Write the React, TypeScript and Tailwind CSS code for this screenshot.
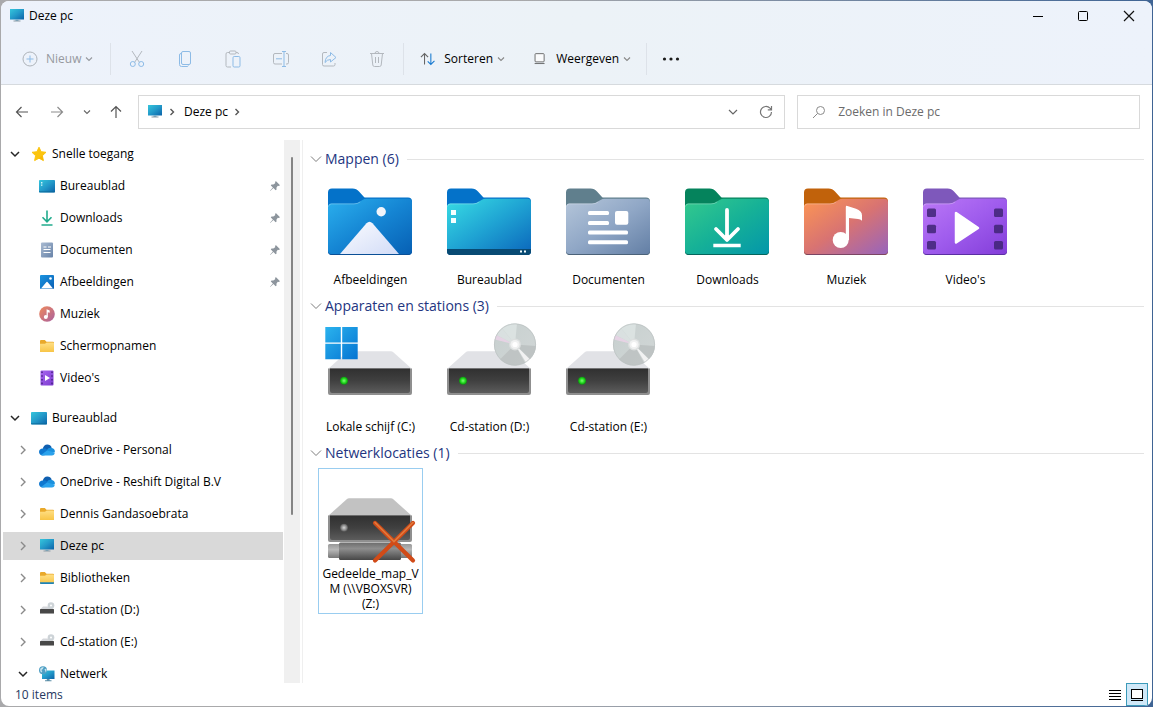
import React, { ReactNode } from "react";

type IconProps = { className?: string };

/* ---------- shared glyphs ---------- */

function ChevronDown({ className = "" }: IconProps) {
  return (
    <svg viewBox="0 0 8 8" className={`size-2 shrink-0 ${className}`} fill="none" stroke="currentColor" aria-hidden="true">
      <path d="M1 2.5 4 5.5 7 2.5" strokeWidth="1.1" />
    </svg>
  );
}

function TreeChevron({ open }: { open: boolean }) {
  return open ? (
    <svg viewBox="0 0 10 10" className="size-2.5 shrink-0 text-[#262626]" fill="none" stroke="currentColor" aria-hidden="true">
      <path d="M1 3 5 7 9 3" strokeWidth="1.5" />
    </svg>
  ) : (
    <svg viewBox="0 0 10 10" className="size-2.5 shrink-0 text-[#8a8a8a]" fill="none" stroke="currentColor" aria-hidden="true">
      <path d="M3 1 7 5 3 9" strokeWidth="1.4" />
    </svg>
  );
}

function BreadcrumbChevron() {
  return (
    <svg viewBox="0 0 6 8" className="h-2 w-1.5 shrink-0 text-[#555]" fill="none" stroke="currentColor" aria-hidden="true">
      <path d="M1.5 1 4.5 4 1.5 7" strokeWidth="1.4" />
    </svg>
  );
}

function Small({ children }: { children: ReactNode }) {
  return (
    <svg viewBox="0 0 16 16" className="size-4 shrink-0" aria-hidden="true">
      {children}
    </svg>
  );
}

/* ---------- 16px icons ---------- */

function PcIcon() {
  return (
    <Small>
      <path d="M1 1h14v10.5H1z" fill="url(#screen)" />
      <path d="M6.5 11.5h3V13h-3z" fill="#6fa7c4" />
      <path d="M4.5 12.5h7v1h-7z" fill="#8a9aa5" />
    </Small>
  );
}

function StarIcon() {
  return (
    <Small>
      <path
        d="M8 1.2 10.1 5.7 15 6.3 11.4 9.7 12.4 14.6 8 12.2 3.6 14.6 4.6 9.7 1 6.3 5.9 5.7z"
        fill="#fbc40f"
        stroke="#fbc40f"
        strokeLinejoin="round"
      />
      <path d="M8 12.2 12.4 14.6 11.4 9.7 15 6.3" fill="#f6b100" opacity=".6" />
    </Small>
  );
}

function DesktopIcon({ dots = false }: { dots?: boolean }) {
  return (
    <Small>
      <rect y="2" width="16" height="12.5" rx=".8" fill="url(#screen)" />
      {dots && <path d="M2 4h1.4v1.4H2zM2 6.4h1.4v1.4H2z" fill="#d7f6fb" />}
      <path d="M0 13h16v.7q0 .8-.8.8H.8q-.8 0-.8-.8z" fill="#0a6a9a" opacity=".6" />
    </Small>
  );
}

function DownloadIcon() {
  return (
    <Small>
      <g fill="none" stroke="#20ab8c" strokeWidth="1.6">
        <path d="M8 .5v11M3.5 7.3 8 11.8l4.5-4.5" />
        <path d="M2.500 15h11" />
      </g>
    </Small>
  );
}

function DocumentIcon() {
  return (
    <Small>
      <rect x="2" y=".5" width="12" height="15" rx="1" fill="url(#doc)" />
      <path d="M4.500 5h3M4.500 7.500h7M4.500 10.500h7M9 5h3" stroke="#fff" strokeWidth="1.200" />
    </Small>
  );
}

function PictureIcon() {
  return (
    <Small>
      <rect x="1" y="1" width="14" height="14" rx="1" fill="url(#pic)" />
      <path d="M2 14.500 7.500 8q.5-.6 1 0L14 14.500z" fill="#fff" />
      <circle cx="11.500" cy="4.500" r="1.300" fill="#fff" />
    </Small>
  );
}

function MusicIcon() {
  return (
    <Small>
      <circle cx="8" cy="8" r="7.800" fill="url(#mus)" />
      <circle cx="6.800" cy="11" r="2" fill="#fff" />
      <path d="M7.600 3.300 10.700 4.500V6.800L8.800 6.200V11H7.600z" fill="#fff" />
    </Small>
  );
}

function FolderIcon({ library = false }: { library?: boolean }) {
  return (
    <Small>
      <path d="M1 3q0-1 1-1h3.800l1.700 1.700H14q1 0 1 1V13q0 1-1 1H2q-1 0-1-1z" fill="#e9a92b" />
      <path d="M1 5.800h5l1.700-1.300H14q1 0 1 1V13q0 1-1 1H2q-1 0-1-1z" fill="url(#fold)" />
      {library && <path d="M1 12.300h14v.7q0 1-1 1H2q-1 0-1-1z" fill="#1c83b8" />}
    </Small>
  );
}

function VideoIcon() {
  return (
    <Small>
      <rect x="1.500" y=".5" width="13" height="15" rx="1" fill="url(#vid)" />
      <path d="M6 5v6l5-3z" fill="#fff" />
      <path d="M3 1.500v13M13 1.500v13" stroke="#4b2385" strokeWidth="1.500" strokeDasharray="1.600 2.100" />
    </Small>
  );
}

function CloudIcon() {
  return (
    <Small>
      <path d="M3.800 7.200C4 4.500 6 2.600 8.400 2.600c2 0 3.600 1.200 4.300 3L8 9z" fill="#0f5fb0" />
      <path d="M3.700 13.400C1.600 13.400 0 11.800 0 9.900s1.700-3.500 3.900-3.400c1-.6 2.400-.3 3.400.5L12 12z" fill="#0f78d0" />
      <path d="M8 8c1-2 3-2.800 4.900-2 1.800.4 3.100 2 3.100 3.800L11 11z" fill="#1a90dd" />
      <path d="M2 13 8 8.500 15.800 10.500q-.2 2.900-3 2.900H3.700q-1 0-1.700-.4z" fill="#2ba2ec" />
    </Small>
  );
}

function DriveIcon() {
  return (
    <Small>
      <path d="M4 4.500h8L15 7.500H1z" fill="#d5d7db" />
      <circle cx="12" cy="3.500" r="3.300" fill="#cdd3d7" />
      <circle cx="12" cy="3.500" r="1" fill="#fff" />
      <rect x="1" y="7" width="14" height="4.500" rx=".5" fill="#484848" />
      <path d="M1 11.500h14" stroke="#999" strokeWidth=".6" />
    </Small>
  );
}

function NetworkIcon() {
  return (
    <Small>
      <path d="M3 4.500h12.500V13H3z" fill="url(#screen)" />
      <path d="M7.800 13h2.800v1.500H7.800zM6 14.300h6.500v1H6z" fill="#5b8ea8" />
      <circle cx="4" cy="4.200" r="4" fill="#4f9fc4" />
      <path d="M1.200 2.800q1.500-2 3.500-1.800l-.8 2-1.400 1 .8 2-1.300.5q-1.200-1.700-.8-3.700zM5.500 3l1.800-.3q.7 2-.5 3.700z" fill="#c4e3ee" />
    </Small>
  );
}

function PinIcon() {
  return (
    <svg viewBox="0 0 12 12" className="size-3 shrink-0" aria-hidden="true">
      <path d="M6.800 1 11 5.200 9.800 5.900 8.800 5.800 7.400 7.700 7.600 9.500 6.600 10.200 4.500 8.100 1.200 11 1 10.800 3.900 7.500 1.800 5.400 2.500 4.400 4.300 4.600 6.200 3.200 6.100 2.200z" fill="#8d959d" />
    </svg>
  );
}

/* ---------- large tile art ---------- */

function Art({ children }: { children: ReactNode }) {
  return (
    <svg viewBox="0 0 103 97" className="h-[97px] w-[103px] shrink-0" aria-hidden="true">
      {children}
    </svg>
  );
}

type FolderArtProps = {
  id: string;
  back: string;
  edge: string;
  stops: [string, string, string];
  children: ReactNode;
};

function FolderArt({ id, back, edge, stops, children }: FolderArtProps) {
  return (
    <Art>
      <defs>
        <linearGradient id={id} x1="0" y1="0" x2="1" y2="1">
          <stop offset="0" stopColor={stops[0]} />
          <stop offset=".5" stopColor={stops[1]} />
          <stop offset="1" stopColor={stops[2]} />
        </linearGradient>
      </defs>
      <path d="M9 17.500q0-4 4-4h20.500q4 0 6.500 3l5 5.500q.6.500 1.500.5H89q4 0 4 4v49.500q0 4-4 4H13q-4 0-4-4z" fill={back} />
      <path d="M9 70h84v6q0 4-4 4H13q-4 0-4-4z" fill={edge} />
      <path
        d="M9 32q0-3.500 3.500-3.500H35q3.500 0 6-2l2.500-1.500q2-1.200 4-1.200H89.500q3.500 0 3.500 3.500V75.500q0 3.500-3.500 3.500H12.500q-3.500 0-3.500-3.500z"
        fill={`url(#${id})`}
      />
      <path d="M9.500 31.500q.5-2.600 3-2.600H35q3.500 0 6.300-2" fill="none" stroke="#fff" strokeOpacity=".35" strokeWidth=".8" />
      {children}
    </Art>
  );
}

function PicturesArt() {
  return (
    <FolderArt id="f-pic" back="#0472c9" edge="#0a4f96" stops={["#2bb0ee", "#1585d3", "#0760b4"]}>
      <circle cx="62.200" cy="36.700" r="4.700" fill="#f1f4fa" />
      <path d="M21 79 47.500 48.300q3-3 6 0L80 79z" fill="url(#mount)" />
    </FolderArt>
  );
}

function DesktopArt() {
  return (
    <FolderArt id="f-desk" back="#0472c9" edge="#073c66" stops={["#38dde4", "#1fa3d3", "#0b66bb"]}>
      <path d="M9 74h84v2q0 4-4 4H13q-4 0-4-4z" fill="#084a73" />
      <path d="M13 35h5v5h-5zM13 43h5v5h-5zM82 75.500h2v2h-2zM86 75.500h2v2h-2z" fill="#f5ffff" />
    </FolderArt>
  );
}

function DocumentsArt() {
  return (
    <FolderArt id="f-doc" back="#607f8d" edge="#4b6279" stops={["#b5c6da", "#90a7c6", "#637fa5"]}>
      <g fill="#fff">
        <rect x="31" y="36" width="21" height="4" rx="1.500" />
        <rect x="31" y="46" width="21" height="4" rx="1.500" />
        <rect x="31" y="55.500" width="40" height="4" rx="1.500" />
        <rect x="31" y="65.300" width="40" height="4" rx="1.500" />
        <rect x="58" y="36" width="13.300" height="13.700" rx="2" />
      </g>
    </FolderArt>
  );
}

function DownloadsArt() {
  return (
    <FolderArt id="f-down" back="#05835c" edge="#05655c" stops={["#35ca8d", "#16b197", "#0396aa"]}>
      <g fill="none" stroke="#fff" strokeWidth="3.800" strokeLinecap="round" strokeLinejoin="round">
        <path d="M51 35v28M40 54 51 65 62 54" />
        <path d="M39 70.500h24" strokeLinecap="square" strokeWidth="3.400" />
      </g>
    </FolderArt>
  );
}

function MusicArt() {
  return (
    <FolderArt id="f-mus" back="#c1620b" edge="#7b4563" stops={["#fd9653", "#d87372", "#9764bd"]}>
      <circle cx="45.700" cy="65" r="8" fill="#fff" />
      <path d="M50.800 32q0-1.600 1.600-1.100L61 33.700q6 2 6 6.800v5.200q-1.500-1.200-4-1.600L54 43v22h-3.200z" fill="#fff" />
    </FolderArt>
  );
}

function VideosArt() {
  return (
    <FolderArt id="f-vid" back="#7e58bb" edge="#5b2fa3" stops={["#bb78f7", "#9f5ced", "#833dd9"]}>
      <g fill="#3f2476" fillOpacity=".85">
        {[33.5, 49.8, 66].map((y) => (
          <g key={y}>
            <rect x="13" y={y} width="9" height="8.500" rx="1.500" />
            <rect x="80" y={y} width="9" height="8.500" rx="1.500" />
          </g>
        ))}
      </g>
      <path d="M42 38v29.500L64 53z" fill="#fff" stroke="#fff" strokeWidth="2.500" strokeLinejoin="round" />
    </FolderArt>
  );
}

function DriveBody({ top, led }: { top: string; led: string }) {
  return (
    <>
      <path d="M28 30q.8-.7 2-.7h42q1.200 0 2 .7L93 47H9z" fill={top} />
      <path d="M9 46.500h84v24.500q0 2-2 2H11q-2 0-2-2z" fill="#8f8f8f" />
      <path d="M11 46.500h80v22.500q0 2-2 2H13q-2 0-2-2z" fill="url(#metal)" />
      <circle cx="25" cy="58.700" r="4" fill={`url(#${led})`} />
    </>
  );
}

function LocalDriveArt() {
  return (
    <Art>
      <DriveBody top="#e1e2e6" led="ledGreen" />
      <path d="M6.300 5h15.500v15.500H6.300zM23.200 5h15.500v15.500H23.200zM6.300 21.800h15.500V37.200H6.300zM23.200 21.800h15.500V37.200H23.200z" fill="url(#win)" />
    </Art>
  );
}

function DiscDriveArt() {
  return (
    <Art>
      <DriveBody top="#e1e2e6" led="ledGreen" />
      <circle cx="77" cy="22.500" r="21" fill="url(#disc)" />
      <path d="M77 22.500 56.800 17.500Q57.200 15.500 58.500 13z" fill="#ecd3e8" opacity=".8" />
      <path d="M77 22.500 58.500 13Q61 8.500 64 6z" fill="#dde4e3" opacity=".8" />
      <path d="M77 22.500 64 6q6-5 15-4.400z" fill="#dfe6e5" opacity=".8" />
      <path d="M77 22.500 97.900 24Q97.500 32 92 37z" fill="#b9bebe" opacity=".8" />
      <path d="M77 22.500 62 37.500Q69 44 78 43.500L87 41z" fill="#b9bebe" opacity=".7" />
      <path d="M77 22.500 92 37.500 88 40.500z" fill="#f5f5f5" opacity=".9" />
      <circle cx="77" cy="22.500" r="6" fill="#dcdfdf" />
      <circle cx="77" cy="22.500" r="4.600" fill="#f0f1f1" />
      <circle cx="77" cy="22.500" r="2.600" fill="#fff" />
      <circle cx="77" cy="22.500" r="20.600" fill="none" stroke="#bcc1c1" strokeWidth=".7" />
    </Art>
  );
}

function NetworkDriveArt() {
  return (
    <Art>
      <DriveBody top="#c2c2c2" led="ledGray" />
      <rect x="9" y="75" width="84" height="14" rx="1.500" fill="url(#pipeLight)" />
      <rect x="20" y="73.500" width="62" height="17.500" rx="1.500" fill="url(#pipe)" />
      <g stroke="#d14b18" strokeWidth="4.200" strokeLinecap="round">
        <path d="M56 54 94 91.500M94 54 56 91.500" />
      </g>
      <path d="M56 53.500 75 72.500 94 53.500" fill="none" stroke="#e27a3c" strokeWidth="1.600" strokeLinecap="round" />
    </Art>
  );
}

function SharedGradients() {
  return (
    <svg className="absolute size-0" aria-hidden="true">
      <defs>
        <linearGradient id="screen" x1="0" y1="0" x2="1" y2="1">
          <stop offset="0" stopColor="#35c6dc" />
          <stop offset=".5" stopColor="#2399c9" />
          <stop offset="1" stopColor="#0b62a8" />
        </linearGradient>
        <linearGradient id="doc" x1="0" y1="0" x2="1" y2="1">
          <stop offset="0" stopColor="#a9bbd2" />
          <stop offset="1" stopColor="#6883a8" />
        </linearGradient>
        <linearGradient id="pic" x1="0" y1="0" x2="1" y2="1">
          <stop offset="0" stopColor="#1b94e0" />
          <stop offset="1" stopColor="#0a5fb4" />
        </linearGradient>
        <linearGradient id="mus" x1="0" y1="0" x2="1" y2="1">
          <stop offset="0" stopColor="#f08a5b" />
          <stop offset="1" stopColor="#a9609f" />
        </linearGradient>
        <linearGradient id="fold" x1="0" y1="0" x2="0" y2="1">
          <stop offset="0" stopColor="#ffdf85" />
          <stop offset="1" stopColor="#f8c546" />
        </linearGradient>
        <linearGradient id="vid" x1="0" y1="0" x2="1" y2="1">
          <stop offset="0" stopColor="#a765ef" />
          <stop offset="1" stopColor="#7c3bd0" />
        </linearGradient>
        <linearGradient id="mount" x1="0" y1="0" x2="1" y2="1">
          <stop offset="0" stopColor="#fbfcff" />
          <stop offset="1" stopColor="#d2dcf7" />
        </linearGradient>
        <linearGradient id="metal" x1="0" y1="0" x2="0" y2="1">
          <stop offset="0" stopColor="#303030" />
          <stop offset=".5" stopColor="#404040" />
          <stop offset="1" stopColor="#5c5c5c" />
        </linearGradient>
        <linearGradient id="win" x1="0" y1="0" x2="1" y2="1">
          <stop offset="0" stopColor="#2bb3ee" />
          <stop offset="1" stopColor="#0474d2" />
        </linearGradient>
        <linearGradient id="disc" x1="0" y1="0" x2="1" y2="1">
          <stop offset="0" stopColor="#c6cfce" />
          <stop offset="1" stopColor="#d2d7d7" />
        </linearGradient>
        <linearGradient id="pipe" x1="0" y1="0" x2="0" y2="1">
          <stop offset="0" stopColor="#6c6c6c" />
          <stop offset=".35" stopColor="#8e8e8e" />
          <stop offset="1" stopColor="#474747" />
        </linearGradient>
        <linearGradient id="pipeLight" x1="0" y1="0" x2="0" y2="1">
          <stop offset="0" stopColor="#999" />
          <stop offset=".4" stopColor="#b8b8b8" />
          <stop offset="1" stopColor="#777" />
        </linearGradient>
        <radialGradient id="ledGreen">
          <stop offset="0" stopColor="#7dff73" />
          <stop offset=".6" stopColor="#20d81c" />
          <stop offset="1" stopColor="#0f8a12" />
        </radialGradient>
        <radialGradient id="ledGray">
          <stop offset="0" stopColor="#d8d8d8" />
          <stop offset=".6" stopColor="#909090" />
          <stop offset="1" stopColor="#555" />
        </radialGradient>
      </defs>
    </svg>
  );
}

/* ---------- title bar and command bar ---------- */

function TitleBar() {
  return (
    <header className="flex h-[30px] shrink-0 items-center pl-2">
      <PcIcon />
      <h1 className="ml-1">Deze pc</h1>
      <div className="ml-auto flex h-full">
        <button aria-label="Minimaliseren" className="grid h-full w-[45px] place-items-center">
          <svg viewBox="0 0 12 12" className="size-3" stroke="#000" aria-hidden="true">
            <path d="M1 6.500h10" />
          </svg>
        </button>
        <button aria-label="Maximaliseren" className="grid h-full w-[46px] place-items-center">
          <svg viewBox="0 0 12 12" className="size-3" fill="none" stroke="#000" aria-hidden="true">
            <rect x="1.500" y="1.500" width="9" height="9" rx="1" />
          </svg>
        </button>
        <button aria-label="Sluiten" className="grid h-full w-[46px] place-items-center">
          <svg viewBox="0 0 12 12" className="size-3" stroke="#111" strokeWidth="1.200" aria-hidden="true">
            <path d="M1 1 11 11M11 1 1 11" />
          </svg>
        </button>
      </div>
    </header>
  );
}

const GRAY = "#b3b8be";
const BLUE = "#8dbbe6";

const commands: { label: string; art: ReactNode }[] = [
  {
    label: "Knippen",
    art: (
      <>
        <path d="M4 1 11.500 12.500M14 1 6.500 12.500" stroke={GRAY} />
        <circle cx="4.800" cy="14" r="2.500" stroke={BLUE} />
        <circle cx="13.200" cy="14" r="2.500" stroke={BLUE} />
      </>
    ),
  },
  {
    label: "Kopiëren",
    art: (
      <>
        <rect x="5.500" y="1.500" width="9" height="13" rx="1.500" stroke={BLUE} />
        <path d="M5.500 3.500H5Q3.500 3.500 3.500 5v9.500q0 2 2 2H11q1 0 1.500-1" stroke={BLUE} />
      </>
    ),
  },
  {
    label: "Plakken",
    art: (
      <>
        <path d="M5.500 2.500h-2q-1.500 0-1.500 1.500v11.500q0 1.500 1.500 1.500H7M12 2.500h1q1.500 0 1.500 1.500" stroke={GRAY} />
        <rect x="5.500" y="1" width="6.500" height="3" rx="1" stroke={GRAY} />
        <rect x="9" y="6.500" width="7" height="10.500" rx="1.200" stroke={BLUE} />
      </>
    ),
  },
  {
    label: "Naam wijzigen",
    art: (
      <>
        <path d="M10 3.500H3Q1.500 3.500 1.500 5v7.500Q1.500 14 3 14h7M14 3.500h1q1.500 0 1.500 1.500v7.500q0 1.500-1.500 1.500h-1" stroke={GRAY} />
        <path d="M12 1.500v15M10 1.500h4M10 16.500h4M4 8.800h6" stroke={BLUE} />
      </>
    ),
  },
  {
    label: "Delen",
    art: (
      <>
        <path d="M7 2.500H4Q2.500 2.500 2.500 4v10.500Q2.500 16 4 16h9.500q1.500 0 1.500-1.500V13" stroke={GRAY} />
        <path d="M10.500 2.500 16 7.500 10.500 12V9.500Q7 9.500 5 12.500 5.500 6 10.500 5.500z" stroke={BLUE} strokeLinejoin="round" />
      </>
    ),
  },
  {
    label: "Verwijderen",
    art: (
      <path
        d="M2 3.500h14M7 3.500Q7 1.500 9 1.500T11 3.500M3.500 3.500 4.800 15Q5 16.500 6.500 16.500h5Q13 16.500 13.200 15L14.500 3.500M7.500 7v6M10.500 7v6"
        stroke={GRAY}
      />
    ),
  },
];

function Separator() {
  return <div className="h-8 w-px shrink-0 bg-[#dde2e9]" />;
}

function CommandBar() {
  return (
    <div role="toolbar" className="flex h-[54px] shrink-0 items-center border-b border-[#d6dade] pt-[3px]">
      <button disabled className="flex w-[109px] items-center pl-[21px] text-[#96999e]">
        <svg viewBox="0 0 16 16" className="size-4" fill="none" aria-hidden="true">
          <circle cx="8" cy="8" r="7" stroke="#aeb3b9" />
          <path d="M8 4.500v7M4.500 8h7" stroke={BLUE} />
        </svg>
        <span className="ml-2">Nieuw</span>
        <ChevronDown className="ml-1" />
      </button>
      <Separator />
      <div className="flex px-0.5">
        {commands.map((c) => (
          <button key={c.label} disabled aria-label={c.label} className="grid h-8 w-12 place-items-center">
            <svg viewBox="0 0 18 18" className="size-[18px]" fill="none" aria-hidden="true">
              {c.art}
            </svg>
          </button>
        ))}
      </div>
      <Separator />
      <button className="ml-4 flex w-[85px] items-center">
        <svg viewBox="0 0 18 16" className="h-4 w-[18px]" fill="none" strokeWidth="1.200" aria-hidden="true">
          <path d="M5 14V2M1 6l4-4 4 4" stroke="#666" />
          <path d="M12 2v12M8.500 10.500 12 14l4-4" stroke="#1a7bd0" />
        </svg>
        <span className="ml-2">Sorteren</span>
        <ChevronDown className="ml-1 text-[#888]" />
      </button>
      <button className="ml-7 flex w-[98px] items-center">
        <svg viewBox="0 0 16 16" className="size-4" fill="none" stroke="#555" aria-hidden="true">
          <rect x="2.500" y="1.500" width="11" height="10" rx="1" fill="#fafbfc" />
          <path d="M2 13.500h12" />
        </svg>
        <span className="ml-2.5">Weergeven</span>
        <ChevronDown className="ml-1 text-[#888]" />
      </button>
      <div className="ml-[15px]">
        <Separator />
      </div>
      <button aria-label="Meer opties" className="ml-2 grid size-8 place-items-center">
        <svg viewBox="0 0 18 4" className="h-1 w-[18px]" fill="#1a1a1a" aria-hidden="true">
          <circle cx="2.500" cy="2" r="1.600" />
          <circle cx="9" cy="2" r="1.600" />
          <circle cx="15.500" cy="2" r="1.600" />
        </svg>
      </button>
    </div>
  );
}

/* ---------- navigation row ---------- */

function Arrow({ d, label, tone }: { d: string; label: string; tone: string }) {
  return (
    <button aria-label={label} className={`grid size-6 place-items-center ${tone}`}>
      <svg viewBox="0 0 14 14" className="size-3.5" fill="none" stroke="currentColor" strokeWidth="1.200" aria-hidden="true">
        <path d={d} />
      </svg>
    </button>
  );
}

function NavigationRow() {
  return (
    <div className="flex shrink-0 items-center bg-white pt-2.5 pr-3 pb-[11px] pl-[9px]">
      <Arrow label="Terug" tone="text-[#555]" d="M13 7H1.500M6.500 2 1.500 7l5 5" />
      <div className="ml-[11px]">
        <Arrow label="Vooruit" tone="text-[#8c8c8c]" d="M1 7h11.500M7.500 2l5 5-5 5" />
      </div>
      <button aria-label="Recente locaties" className="ml-2.5 grid h-6 w-4 place-items-center text-[#666]">
        <ChevronDown />
      </button>
      <div className="ml-[9px]">
        <Arrow label="Omhoog" tone="text-[#555]" d="M7 13V1.500M2 6.500l5-5 5 5" />
      </div>
      <nav aria-label="Adresbalk" className="ml-2.5 flex h-[34px] flex-56 items-center border border-[#d9d9d9] pr-1.5 pl-2">
        <PcIcon />
        <span className="ml-1.5">
          <BreadcrumbChevron />
        </span>
        <a href="#deze-pc" className="ml-[9px]">
          Deze pc
        </a>
        <span className="ml-1.5">
          <BreadcrumbChevron />
        </span>
        <button aria-label="Vorige locaties" className="ml-auto grid size-6 place-items-center text-[#666]">
          <svg viewBox="0 0 10 10" className="size-2.5" fill="none" stroke="currentColor" strokeWidth="1.200" aria-hidden="true">
            <path d="M1 3 5 7 9 3" />
          </svg>
        </button>
        <button aria-label="Vernieuwen" className="ml-[9px] grid size-6 place-items-center text-[#777]">
          <svg viewBox="0 0 14 14" className="size-3.5" fill="none" stroke="currentColor" strokeWidth="1.200" aria-hidden="true">
            <path d="M12.500 7A5.500 5.500 0 1 1 11 3.200L12.500 4.700M12.500 1v3.800H8.800" />
          </svg>
        </button>
      </nav>
      <label className="ml-3 flex h-[34px] flex-29 items-center border border-[#d9d9d9] pl-3.5">
        <svg viewBox="0 0 14 14" className="size-3.5 shrink-0" fill="none" stroke="#8a8a8a" aria-hidden="true">
          <circle cx="8.500" cy="5.500" r="4" />
          <path d="M5.500 8.500 1 13" />
        </svg>
        <input
          type="search"
          aria-label="Zoeken in Deze pc"
          placeholder="Zoeken in Deze pc"
          className="ml-3 min-w-0 flex-1 bg-transparent outline-none placeholder:text-[#6b6b6b]"
        />
      </label>
    </div>
  );
}

/* ---------- sidebar tree ---------- */

type Row = { label: string; icon: ReactNode; pinned?: boolean; chevron?: "open" | "closed"; selected?: boolean };

const quickAccess: Row[] = [
  { label: "Bureaublad", icon: <DesktopIcon dots />, pinned: true },
  { label: "Downloads", icon: <DownloadIcon />, pinned: true },
  { label: "Documenten", icon: <DocumentIcon />, pinned: true },
  { label: "Afbeeldingen", icon: <PictureIcon />, pinned: true },
  { label: "Muziek", icon: <MusicIcon /> },
  { label: "Schermopnamen", icon: <FolderIcon /> },
  { label: "Video's", icon: <VideoIcon /> },
];

const desktopTree: Row[] = [
  { label: "OneDrive - Personal", icon: <CloudIcon />, chevron: "closed" },
  { label: "OneDrive - Reshift Digital B.V", icon: <CloudIcon />, chevron: "closed" },
  { label: "Dennis Gandasoebrata", icon: <FolderIcon />, chevron: "closed" },
  { label: "Deze pc", icon: <PcIcon />, chevron: "closed", selected: true },
  { label: "Bibliotheken", icon: <FolderIcon library />, chevron: "closed" },
  { label: "Cd-station (D:)", icon: <DriveIcon />, chevron: "closed" },
  { label: "Cd-station (E:)", icon: <DriveIcon />, chevron: "closed" },
  { label: "Netwerk", icon: <NetworkIcon />, chevron: "open" },
];

function TreeRow({ row, root = false }: { row: Row; root?: boolean }) {
  return (
    <button
      className={`flex h-7 w-full items-center pr-0.5 text-left ${root ? "pl-[7px]" : "pl-[15px]"} ${row.selected ? "bg-[#d9d9d9]" : ""}`}
    >
      <span className="mr-[11px] w-2.5">{row.chevron && <TreeChevron open={row.chevron === "open"} />}</span>
      {row.icon}
      <span className="ml-[5px]">{row.label}</span>
      {row.pinned && (
        <span className="ml-auto">
          <PinIcon />
        </span>
      )}
    </button>
  );
}

function TreeGroup({ root, rows }: { root: Row; rows: Row[] }) {
  return (
    <li>
      <TreeRow row={root} root />
      <ul className="mt-1 flex flex-col gap-1">
        {rows.map((r) => (
          <li key={r.label}>
            <TreeRow row={r} />
          </li>
        ))}
      </ul>
    </li>
  );
}

function Sidebar() {
  return (
    <aside className="flex w-[302px] shrink-0 overflow-hidden border-r border-[#efefef] pr-0.5">
      <ul className="flex min-w-0 flex-1 flex-col gap-3 pr-px pl-0.5">
        <TreeGroup root={{ label: "Snelle toegang", icon: <StarIcon />, chevron: "open" }} rows={quickAccess} />
        <TreeGroup root={{ label: "Bureaublad", icon: <DesktopIcon />, chevron: "open" }} rows={desktopTree} />
      </ul>
      <div className="flex w-4 shrink-0 justify-center bg-[#f0f0f0] pt-[17px]">
        <div className="h-[68%] w-0.5 rounded-full bg-[#858585]" />
      </div>
    </aside>
  );
}

/* ---------- content ---------- */

type Item = { label: ReactNode; key: string; art: ReactNode; focused?: boolean };

const folders: Item[] = [
  { key: "pictures", label: "Afbeeldingen", art: <PicturesArt /> },
  { key: "desktop", label: "Bureaublad", art: <DesktopArt /> },
  { key: "documents", label: "Documenten", art: <DocumentsArt /> },
  { key: "downloads", label: "Downloads", art: <DownloadsArt /> },
  { key: "music", label: "Muziek", art: <MusicArt /> },
  { key: "videos", label: "Video's", art: <VideosArt /> },
];

const drives: Item[] = [
  { key: "c", label: "Lokale schijf (C:)", art: <LocalDriveArt /> },
  { key: "d", label: "Cd-station (D:)", art: <DiscDriveArt /> },
  { key: "e", label: "Cd-station (E:)", art: <DiscDriveArt /> },
];

const network: Item[] = [
  {
    key: "z",
    label: (
      <>
        Gedeelde_map_V
        <br />
        M (\\VBOXSVR)
        <br />
        (Z:)
      </>
    ),
    art: <NetworkDriveArt />,
    focused: true,
  },
];

function Section({ title, items }: { title: string; items: Item[] }) {
  return (
    <section>
      <h2 className="flex h-[30px] items-center pr-2 pl-[7px]">
        <button className="flex items-center text-sm leading-5 text-[#23357f]">
          <svg viewBox="0 0 12 12" className="mr-[3px] size-3" fill="none" stroke="#7d7d7d" aria-hidden="true">
            <path d="M1 3.500 6 8.500 11 3.500" />
          </svg>
          {title}
        </button>
        <span className="ml-2 h-px flex-1 bg-[#e3e3e3]" />
      </h2>
      <div className="flex flex-wrap gap-x-3.5 pl-[15px]">
        {items.map((item) => (
          <button
            key={item.key}
            className={`flex min-h-[117px] w-[105px] flex-col items-center border leading-[15px] ${
              item.focused ? "border-[#99cdf0] pb-0.5" : "border-transparent"
            }`}
          >
            {item.art}
            <span className="whitespace-nowrap">{item.label}</span>
          </button>
        ))}
      </div>
    </section>
  );
}

function StatusBar() {
  return (
    <footer className="flex h-[23px] shrink-0 items-center pr-1 pl-3.5">
      <span className="text-[#26385f]">10 items</span>
      <button aria-label="Details" className="ml-auto grid h-full w-[22px] place-items-center">
        <svg viewBox="0 0 12 12" className="size-3" stroke="#000" aria-hidden="true">
          <path d="M0 1.500h12M0 4.500h12M0 7.500h12M0 10.500h12" />
        </svg>
      </button>
      <button aria-label="Grote pictogrammen" aria-pressed="true" className="grid h-full w-[22px] place-items-center border border-[#3c9ab9] bg-[#cfe8f8]">
        <svg viewBox="0 0 12 14" className="h-3.5 w-3" fill="none" stroke="#000" aria-hidden="true">
          <rect x=".5" y="1.500" width="11" height="9" fill="#fff" />
          <path d="M0 12.500h12" />
        </svg>
      </button>
    </footer>
  );
}

export default function App() {
  return (
    <div className="relative h-screen bg-linear-to-r from-[#a9a9ab] from-45% to-[#3f6494] p-px font-['Open_Sans','Noto_Sans',sans-serif] text-xs text-black">
      <SharedGradients />
      <div className="flex h-full flex-col overflow-hidden rounded-lg bg-white">
        <div className="shrink-0 bg-linear-to-r from-[#edf2fb] via-[#ecf2f7] to-[#edf2fb]">
          <TitleBar />
          <CommandBar />
        </div>
        <NavigationRow />
        <div className="flex min-h-0 flex-1">
          <Sidebar />
          <main className="min-w-0 flex-1 overflow-hidden pt-1">
            <Section title="Mappen (6)" items={folders} />
            <Section title="Apparaten en stations (3)" items={drives} />
            <Section title="Netwerklocaties (1)" items={network} />
          </main>
        </div>
        <StatusBar />
      </div>
    </div>
  );
}
